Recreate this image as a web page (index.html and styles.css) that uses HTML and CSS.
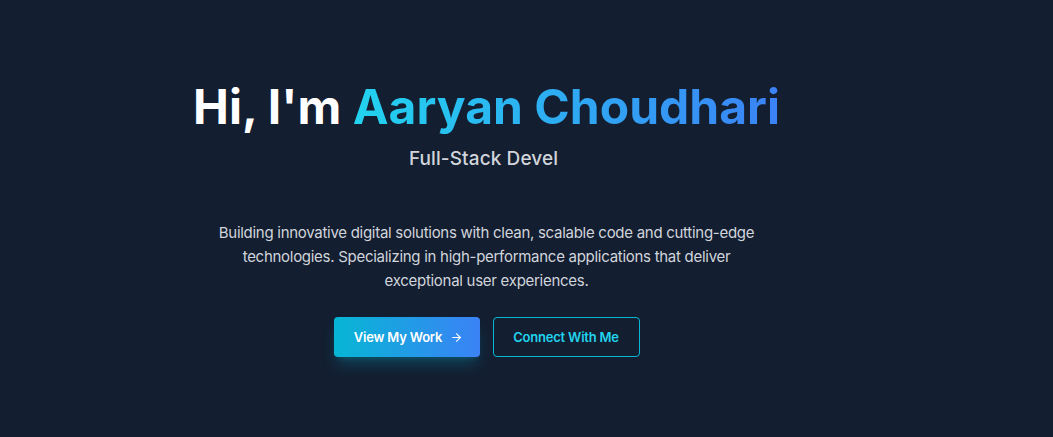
FILE: index.html
```html
<!DOCTYPE html>
<html lang="en">
<head>
<meta charset="utf-8">
<title>Aaryan Choudhari</title>
<link rel="stylesheet" href="styles.css">
</head>
<body>
<main class="page">
  <section class="hero">
    <h1 class="title">Hi, I'm <span class="name">Aaryan Choudhari</span></h1>
    <p class="role">Full-Stack Devel</p>
    <p class="lead">Building innovative digital solutions with clean, scalable code and cutting-edge technologies. Specializing in high-performance applications that deliver exceptional user experiences.</p>
    <div class="actions">
      <a class="btn btn-primary" href="#work">View My Work
        <svg class="arrow" width="13" height="13" viewBox="0 0 24 24" fill="none" stroke="currentColor" stroke-width="2" stroke-linecap="round" stroke-linejoin="round"><path d="M5 12h14"/><path d="M12 5l7 7-7 7"/></svg>
      </a>
      <a class="btn btn-outline" href="#contact">Connect With Me</a>
    </div>
  </section>
  <aside class="spacer"></aside>
</main>
</body>
</html>
```
FILE: styles.css
```css
* { box-sizing: border-box; }
html, body { margin: 0; padding: 0; }
body {
  background: #131e31;
  font-family: Inter, "Noto Sans", sans-serif;
  color: #d1d5db;
  width: 1053px;
  height: 437px;
  overflow: hidden;
}
.page {
  display: flex;
  height: 437px;
}
.hero {
  flex: 1;
  display: flex;
  flex-direction: column;
  align-items: center;
  padding-top: 83px;
}
.spacer { width: 80px; flex: none; }
.title {
  margin: 0;
  font-size: 48px;
  line-height: 48px;
  font-weight: 700;
  color: #ffffff;
}
.name {
  background: linear-gradient(90deg, #22d3ee, #3b82f6);
  -webkit-background-clip: text;
  background-clip: text;
  color: transparent;
}
.role {
  margin: 14px 0 0;
  padding-right: 6px;
  font-size: 19px;
  line-height: 28px;
  font-weight: 500;
  letter-spacing: 0.1px;
  color: #d1d5db;
}
.lead {
  margin: 48px 0 0;
  max-width: 540px;
  text-align: center;
  font-size: 15px;
  letter-spacing: -0.28px;
  line-height: 24px;
  color: #d1d5db;
}
.actions {
  margin-top: 24px;
  display: flex;
  gap: 13px;
}
.btn {
  display: flex;
  align-items: center;
  justify-content: center;
  height: 40px;
  border-radius: 4px;
  font-size: 13px;
  font-weight: 600;
  letter-spacing: -0.2px;
  text-decoration: none;
}
.btn-primary {
  width: 146px;
  padding-left: 4px;
  gap: 8px;
  color: #ffffff;
  background: linear-gradient(90deg, #06b6d4, #3b82f6);
  box-shadow: 0 10px 15px -3px rgba(6, 182, 212, 0.25), 0 4px 6px -4px rgba(6, 182, 212, 0.25);
}
.arrow { display: block; }
.btn-outline {
  width: 147px;
  color: #22d3ee;
  border: 1px solid #06b6d4;
  background: transparent;
}
```
